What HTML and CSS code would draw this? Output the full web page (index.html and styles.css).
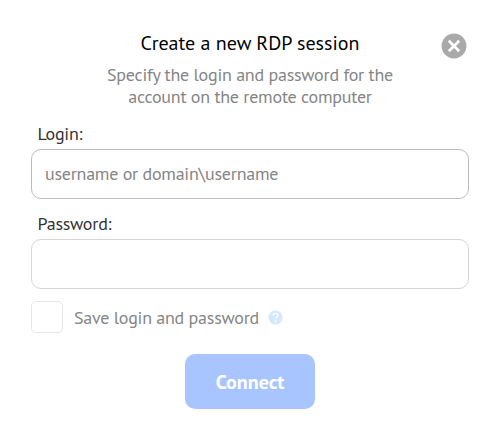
FILE: index.html
```
<!DOCTYPE html>
<html lang="en">

<head>
  <meta charset="utf-8">
  <title>Create a new RDP session</title>
  <meta name="viewport" content="width=device-width, initial-scale=1">
  <link rel="stylesheet" href="styles.css">
</head>

<body>
  <form class="dialog">
    <button class="close" type="button" aria-label="Close">
      <svg width="26" height="26" viewBox="0 0 26 26">
        <circle cx="13" cy="13" r="12.4" fill="#a9a9a9" />
        <path d="M7.8 7.8L18.2 18.2M18.2 7.8L7.8 18.2" stroke="#fff" stroke-width="2.7" />
      </svg>
    </button>
    <h1 class="title">Create a new RDP session</h1>
    <p class="subtitle">Specify the login and password for the<br>account on the remote computer</p>

    <label class="label" for="login">Login:</label>
    <input class="field field-login" id="login" type="text" placeholder="username or domain\username">

    <label class="label" for="password">Password:</label>
    <input class="field" id="password" type="password">

    <div class="save">
      <input class="checkbox" id="save" type="checkbox">
      <label class="save-label" for="save">Save login and password</label>
      <svg class="help" width="15" height="15" viewBox="0 0 15 15">
        <circle cx="7.5" cy="7.5" r="7.1" fill="#d4e8ff" />
        <path d="M5.2 5.6C5.3 4.2 6.2 3.4 7.6 3.4C8.9 3.4 9.8 4.2 9.8 5.3C9.8 6.9 7.5 7 7.5 8.9" fill="none" stroke="#fff" stroke-width="1.4" />
        <circle cx="7.5" cy="11.2" r="1" fill="#fff" />
      </svg>
    </div>

    <button class="connect" type="button">Connect</button>
  </form>
</body>

</html>
```
FILE: styles.css
```
body {
  margin: 0;
  background-color: #fff;
}

.dialog,
.dialog input,
.dialog button {
  font-family: "PT Sans", "Noto Sans", "Open Sans", sans-serif;
}

.dialog {
  position: relative;
  box-sizing: border-box;
  width: 500px;
  height: 440px;
  padding: 31px 31px 0;
  display: flex;
  flex-direction: column;
  font-size: 18px;
  letter-spacing: -0.24px;
  line-height: 22px;
  color: #858585;
}

.close {
  position: absolute;
  top: 33px;
  right: 33px;
  width: 26px;
  height: 26px;
  padding: 0;
  border: 0;
  background: none;
}

.close svg {
  display: block;
}

.title {
  margin: 0;
  font-size: 20px;
  font-weight: normal;
  line-height: 24px;
  letter-spacing: 0;
  text-align: center;
  color: #000;
}

.subtitle {
  margin: 9px 0 1px;
  text-align: center;
}

.label {
  margin: 14px 0 4px 6.5px;
  line-height: 22px;
  color: #333;
}

.field {
  box-sizing: border-box;
  width: 438px;
  height: 50px;
  padding: 0 13px 1px;
  border: 1px solid #d6d6d6;
  border-radius: 10px;
  background-color: #fff;
  font-size: 18px;
  letter-spacing: -0.25px;
  outline: none;
}

.field-login {
  border-color: #bcbcbc;
}

.field::placeholder {
  color: #858585;
}

.save {
  display: flex;
  align-items: center;
  margin-top: 12px;
}

.checkbox {
  appearance: none;
  box-sizing: border-box;
  width: 32px;
  height: 32px;
  margin: 0 11px 0 0;
  border: 1px solid #e6e6e6;
  border-radius: 5px;
}

.save-label {
  width: 194px;
  padding-top: 1px;
  white-space: nowrap;
}

.connect {
  align-self: center;
  width: 130px;
  height: 55px;
  margin-top: 21px;
  border: 0;
  border-radius: 10px;
  background-color: #a8c5ff;
  font-size: 20px;
  font-weight: bold;
  color: #fff;
}
```
